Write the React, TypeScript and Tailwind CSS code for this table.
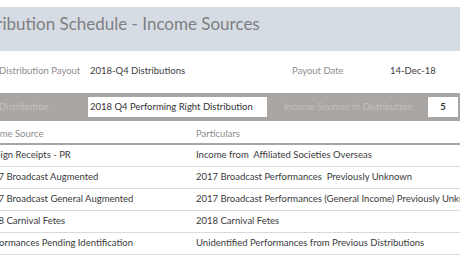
const rows = [
  ["Foreign Receipts - PR", "Income from  Affiliated Societies Overseas"],
  ["2017 Broadcast Augmented", "2017 Broadcast Performances  Previously Unknown"],
  ["2017 Broadcast General Augmented", "2017 Broadcast Performances (General Income) Previously Unknown"],
  ["2018 Carnival Fetes", "2018 Carnival Fetes"],
  ["Performances Pending Identification", "Unidentified Performances from Previous Distributions"],
];

export default function App() {
  return (
    <div
      className="h-[260px] w-[460px] overflow-hidden bg-white text-[#404040]"
      style={{ fontFamily: "Lato, 'Open Sans', sans-serif" }}
    >
      <div className="mt-[7px] flex h-[44px] items-start bg-[#d6dce4] pt-[6px]">
        <h1 className="-ml-[34px] whitespace-nowrap text-[17px] leading-[22px] text-[#7f7f7f]">
          Distribution Schedule - Income Sources
        </h1>
      </div>

      <div className="mt-[12px] flex h-[16px] items-center whitespace-nowrap text-[9.5px]">
        <span className="-ml-[1px] w-[91px] shrink-0 text-[#8c8c8c]">Distribution Payout</span>
        <span className="w-[202px] shrink-0">2018-Q4 Distributions</span>
        <span className="w-[98px] shrink-0 text-[#8c8c8c]">Payout Date</span>
        <span>14-Dec-18</span>
      </div>

      <div className="mt-[14px] flex h-[28px] items-center whitespace-nowrap bg-[#a9a6a3] text-[9.5px]">
        <span className="-ml-[1px] w-[89px] shrink-0 text-[#c4c1be]">Distribution</span>
        <div className="flex h-[20px] w-[179px] shrink-0 items-center bg-white pl-[2px] text-[#333]">
          2018 Q4 Performing Right Distribution
        </div>
        <span className="ml-[17px] w-[144px] shrink-0 text-[#c4c1be]">Income Sources In Distribution</span>
        <div className="flex h-[20px] w-[30px] shrink-0 items-center justify-center bg-white font-bold text-[#333]">
          5
        </div>
      </div>

      <div className="mt-[5px] whitespace-pre text-[9.5px]">
        <div className="flex h-[19px] items-center border-b-2 border-[#a6a6a6] text-[#8c8c8c]">
          <span className="-ml-[18px] w-[214px] shrink-0">Income Source</span>
          <span>Particulars</span>
        </div>
        {rows.map(([source, particulars]) => (
          <div key={source} className="flex h-[22px] items-center border-b border-[#d9d9d9] text-[#3a3a3a]">
            <span className="-ml-[18px] w-[214px] shrink-0 overflow-hidden">{source}</span>
            <span>{particulars}</span>
          </div>
        ))}
      </div>
    </div>
  );
}
